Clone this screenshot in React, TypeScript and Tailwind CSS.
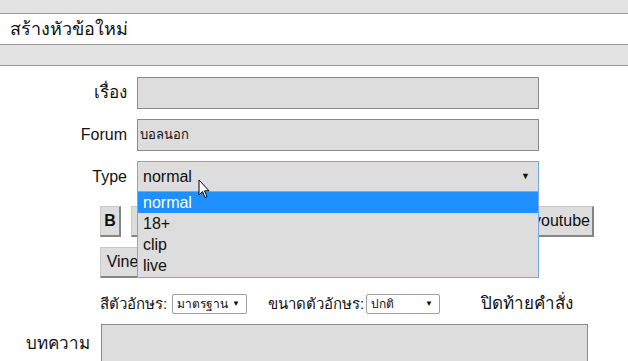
import React from "react";

const FONT = { fontFamily: '"Liberation Sans", Arial, "Noto Sans", sans-serif' };

function Btn({ children, className = "" }: { children?: React.ReactNode; className?: string }) {
  return (
    <div
      className={`h-[31px] flex items-center justify-center bg-[#dddddd] border border-[#c8c8c8] border-r-2 border-b-2 border-r-[#858585] border-b-[#858585] text-[16px] text-[#111] ${className}`}
    >
      {children}
    </div>
  );
}

export default function App() {
  return (
    <div className="w-[628px] h-[361px] overflow-hidden bg-white text-[#111] relative" style={FONT}>
      {/* top band */}
      <div className="h-[14px] bg-[#e3e3e3] border-b border-[#999]" />
      <div className="h-[31px] bg-white border-b border-[#999] flex items-center pl-[10px] text-[18px]">
        สร้างหัวข้อใหม่
      </div>
      <div className="h-[21px] bg-[#e3e3e3] border-b border-[#999]" />

      {/* form */}
      <div className="pt-[11px]">
        <div className="flex items-center h-[32px]">
          <div className="w-[127px] text-right text-[17px]">เรื่อง</div>
          <div className="ml-[10px] w-[402px] h-[32px] bg-[#dddddd] border border-[#8a8a8a]" />
        </div>
        <div className="flex items-center h-[32px] mt-[10px]">
          <div className="w-[127px] text-right text-[16px]">Forum</div>
          <div className="ml-[10px] w-[402px] h-[32px] bg-[#dddddd] border border-[#8a8a8a] flex items-center pl-[2px] text-[13px]">
            บอลนอก
          </div>
        </div>
        <div className="flex items-center h-[31px] mt-[10px] relative">
          <div className="w-[127px] text-right text-[16px]">Type</div>
          <div className="ml-[10px] w-[402px] h-[31px] bg-[#dddddd] border border-[#7aa7e8] flex items-center pl-[5px] pr-[8px] text-[16px]">
            <span className="flex-1">normal</span>
            <span className="text-[9px]">▼</span>
          </div>
          {/* dropdown list */}
          <div className="absolute left-[137px] top-[30px] w-[402px] h-[87px] bg-[#dddddd] border border-[#7aa7e8] z-10 text-[16px] leading-[21px]">
            <div className="h-[21px] bg-[#1e90ff] text-white pl-[5px]">normal</div>
            <div className="h-[21px] pl-[5px]">18+</div>
            <div className="h-[21px] pl-[5px]">clip</div>
            <div className="h-[21px] pl-[5px]">live</div>
          </div>
          {/* cursor */}
          <svg className="absolute left-[198px] top-[18px] z-20" width="13" height="21" viewBox="0 0 13 21">
            <path d="M1 1 L1 16 L4.5 12.5 L7 18.5 L9 17.5 L6.5 11.8 L11 11.8 Z" fill="white" stroke="black" strokeWidth="1" strokeLinejoin="miter" />
          </svg>
        </div>

        {/* toolbar buttons */}
        <div className="flex items-center mt-[14px] pl-[100px] w-[594px] gap-[10px]">
          <Btn className="w-[21px] font-bold">B</Btn>
          <Btn className="w-[21px]" />
          <Btn className="w-[21px]" />
          <Btn className="w-[40px]" />
          <Btn className="w-[64px] ml-auto">youtube</Btn>
        </div>
        <div className="flex items-center mt-[10px] pl-[100px] gap-[10px]">
          <Btn className="w-[46px] px-[4px]">Vine</Btn>
          <Btn className="w-[60px]" />
        </div>

        {/* font row */}
        <div className="flex items-center mt-[16px] h-[20px] text-[15px] whitespace-nowrap">
          <span className="ml-[100px] w-[72px] shrink-0">สีตัวอักษร:</span>
          <div className="w-[75px] shrink-0 h-[20px] border border-[#a0a0a0] rounded-[2px] bg-white flex items-center pl-[4px] pr-[6px] text-[12px]">
            <span className="flex-1">มาตรฐาน</span>
            <span className="text-[8px]">▼</span>
          </div>
          <span className="ml-[21px] w-[98px] shrink-0">ขนาดตัวอักษร:</span>
          <div className="w-[74px] shrink-0 h-[20px] border border-[#a0a0a0] rounded-[2px] bg-white flex items-center pl-[4px] pr-[6px] text-[12px]">
            <span className="flex-1">ปกติ</span>
            <span className="text-[8px]">▼</span>
          </div>
          <span className="ml-[41px] text-[17px] shrink-0">ปิดท้ายคำสั่ง</span>
        </div>

        {/* textarea row */}
        <div className="flex mt-[10px]">
          <div className="w-[91px] text-right pt-[7px] pr-[1px] text-[17px]">บทความ</div>
          <div className="ml-[10px] w-[487px] h-[80px] bg-[#dddddd] border border-[#8a8a8a]" />
        </div>
      </div>
    </div>
  );
}
